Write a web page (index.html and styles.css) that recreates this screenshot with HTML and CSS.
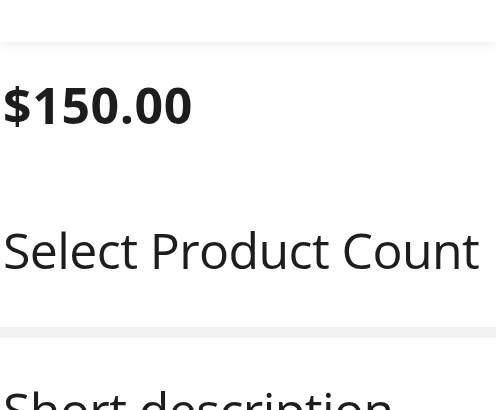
FILE: index.html
```html
<!DOCTYPE html>
<html lang="en">
<head>
<meta charset="utf-8">
<title>Product</title>
<link rel="stylesheet" href="styles.css">
</head>
<body>
<header class="topbar"></header>
<main class="product">
  <section class="info">
    <div class="price">$150.00</div>
    <h2 class="count-title">Select Product Count</h2>
  </section>
  <div class="divider"></div>
  <section class="desc">
    <h2 class="desc-title">Short description</h2>
  </section>
</main>
</body>
</html>
```
FILE: styles.css
```css
html, body {
  margin: 0;
  padding: 0;
  background: #ffffff;
}
body {
  font-family: "Open Sans", "Noto Sans", sans-serif;
  color: #1d1d1d;
  overflow: hidden;
}
.topbar {
  height: 42px;
  background: #ffffff;
  box-shadow: 0 2px 10px rgba(0, 0, 0, 0.08);
  position: relative;
  z-index: 1;
}
.info {
  padding: 33px 0 47px 3px;
}
.price {
  font-size: 50px;
  font-weight: 700;
  line-height: 1.2;
  letter-spacing: 0.6px;
}
.count-title {
  margin: 85px 0 0 0;
  font-size: 50px;
  font-weight: 400;
  line-height: 1.2;
  letter-spacing: -0.6px;
  white-space: nowrap;
}
.divider {
  height: 11px;
  background: #f2f2f2;
}
.desc {
  padding: 42px 0 0 3px;
}
.desc-title {
  margin: 0;
  font-size: 50px;
  font-weight: 400;
  line-height: 1.2;
  letter-spacing: -0.6px;
  white-space: nowrap;
}
```
